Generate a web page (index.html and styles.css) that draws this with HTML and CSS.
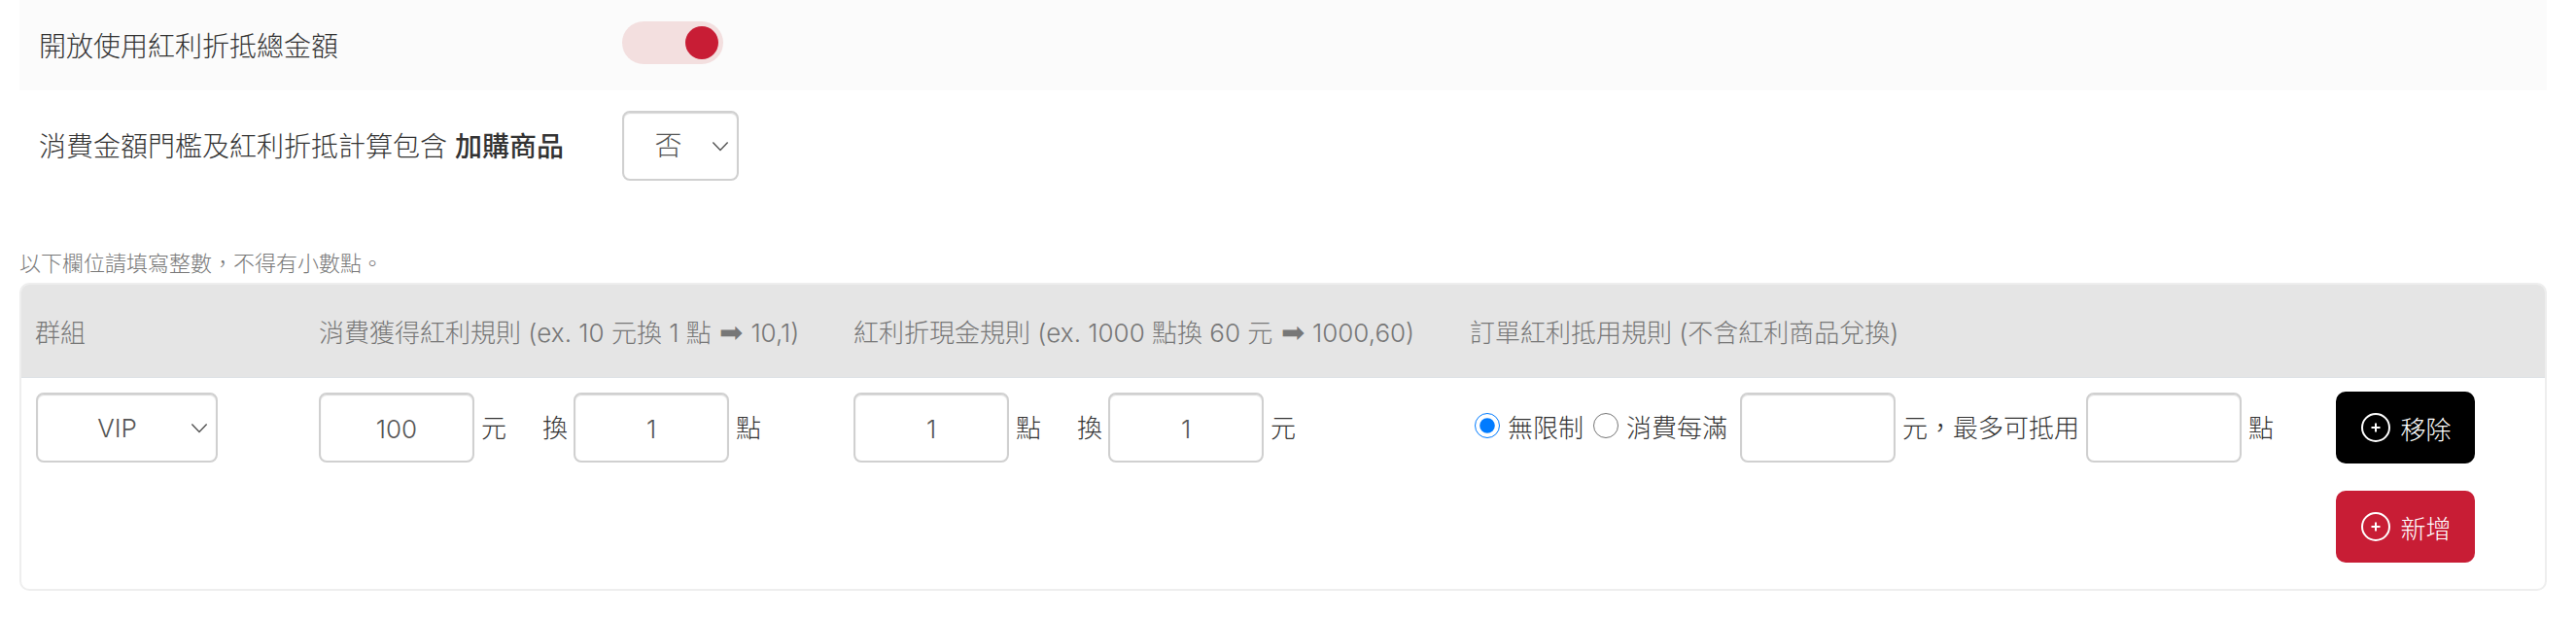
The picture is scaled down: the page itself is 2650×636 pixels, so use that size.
FILE: index.html
```html
<!DOCTYPE html>
<html lang="zh-Hant">
  <head>
    <meta charset="UTF-8" />
    <meta name="viewport" content="width=device-width, initial-scale=1.0" />
    <link rel="stylesheet" href="styles.css">
    <title>紅利設定</title>
  </head>
  <body>
    <div class="page">
      <div class="setting shaded">
        <div class="setting-label">開放使用紅利折抵總金額</div>
        <div class="toggle"><span class="knob"></span></div>
      </div>

      <div class="setting">
        <div class="setting-label">消費金額門檻及紅利折抵計算包含 <b>加購商品</b></div>
        <select class="field select-small">
          <option>否</option>
        </select>
      </div>

      <p class="note">以下欄位請填寫整數，不得有小數點。</p>

      <div class="table-box">
        <table class="rules">
          <colgroup>
            <col class="col-group" />
            <col class="col-earn" />
            <col class="col-cash" />
            <col class="col-order" />
            <col />
          </colgroup>
          <thead>
            <tr>
              <th>群組</th>
              <th>消費獲得紅利規則 (ex. 10 元換 1 點 <span class="arrow">➡</span> 10,1)</th>
              <th>紅利折現金規則 (ex. 1000 點換 60 元 <span class="arrow">➡</span> 1000,60)</th>
              <th>訂單紅利抵用規則 (不含紅利商品兌換)</th>
              <th></th>
            </tr>
          </thead>
          <tbody>
            <tr>
              <td>
                <select class="field select-group">
                  <option>VIP</option>
                </select>
              </td>
              <td>
                <div class="rule">
                  <input class="field num" type="text" value="100" />
                  <span class="unit">元</span>
                  <span class="swap">換</span>
                  <input class="field num" type="text" value="1" />
                  <span class="unit">點</span>
                </div>
              </td>
              <td>
                <div class="rule">
                  <input class="field num" type="text" value="1" />
                  <span class="unit">點</span>
                  <span class="swap">換</span>
                  <input class="field num" type="text" value="1" />
                  <span class="unit">元</span>
                </div>
              </td>
              <td>
                <div class="rule">
                  <label class="radio first"><input type="radio" name="limit" checked />無限制</label>
                  <label class="radio"><input type="radio" name="limit" />消費每滿</label>
                  <input class="field num after-radio" type="text" />
                  <span class="unit">元，最多可抵用</span>
                  <input class="field num tight" type="text" />
                  <span class="unit">點</span>
                </div>
              </td>
              <td class="actions">
                <button class="btn btn-black">
                  <svg class="plus" viewBox="0 0 30 30"><circle cx="15" cy="15" r="14" /><path d="M15 10.5v9M10.5 15h9" /></svg>
                  移除
                </button>
                <button class="btn btn-red">
                  <svg class="plus" viewBox="0 0 30 30"><circle cx="15" cy="15" r="14" /><path d="M15 10.5v9M10.5 15h9" /></svg>
                  新增
                </button>
              </td>
            </tr>
          </tbody>
        </table>
      </div>
    </div>
  </body>
</html>
```

FILE: styles.css
```css
body {
  margin: 0;
  background-color: #fff;
  color: #333;
  font-family: Inter, "Noto Sans CJK TC", sans-serif;
  font-weight: 300;
}

.page {
  padding: 0 30px 0 20px;
}

/* top settings */
.setting {
  display: flex;
  align-items: center;
  height: 114px;
}

.setting.shaded {
  height: 93px;
  background-color: #fbfbfb;
}

.setting-label {
  width: 620px;
  padding-left: 20px;
  padding-bottom: 2px;
  box-sizing: border-box;
  font-size: 28px;
}

.setting-label b {
  font-weight: 500;
}

.toggle {
  display: flex;
  justify-content: flex-end;
  align-items: center;
  width: 104px;
  height: 44px;
  margin-bottom: 6px;
  padding: 0 5px;
  box-sizing: border-box;
  border-radius: 22px;
  background-color: #f3dfdf;
}

.knob {
  width: 34px;
  height: 34px;
  border-radius: 50%;
  background-color: #c81d35;
}

.note {
  margin: 49px 0 0;
  height: 35px;
  font-size: 22px;
  line-height: 30px;
  color: #777;
}

/* form fields */
.field {
  height: 72px;
  box-sizing: border-box;
  border: 2px solid #d0d0d0;
  border-radius: 8px;
  box-shadow: inset 0 1px 1px #d8d8d8;
  background-color: #fff;
  color: #555;
  font-family: inherit;
  font-size: 26px;
  font-weight: 300;
  text-align: center;
  outline: none;
}

select.field {
  appearance: none;
  background-image: url("data:image/svg+xml,%3Csvg xmlns='http://www.w3.org/2000/svg' viewBox='0 0 20 12'%3E%3Cpath d='M1.5 1.5L10 10.5L18.5 1.5' fill='none' stroke='%23555' stroke-width='1.6'/%3E%3C/svg%3E");
  background-repeat: no-repeat;
  background-size: 18px 11px;
  background-position: right 8px center;
}

.select-small {
  width: 120px;
  padding-right: 25px;
  font-size: 28px;
}

.select-group {
  width: 187px;
  margin: 1px 0 0 1px;
  padding-right: 20px;
}

.num {
  width: 160px;
  padding: 2px 8px 0;
}

/* table */
.table-box {
  border: 2px solid #eee;
  border-radius: 10px;
  overflow: hidden;
}

.rules {
  width: 100%;
  border-collapse: collapse;
  table-layout: fixed;
}

.col-group {
  width: 292px;
}

.col-earn {
  width: 550px;
}

.col-cash {
  width: 634px;
}

.col-order {
  width: 891px;
}

.rules th {
  height: 95px;
  padding: 0 14px;
  background-color: #e5e5e5;
  border-bottom: 1px solid #dee2e6;
  color: #777;
  font-size: 26px;
  font-weight: 300;
  text-align: left;
  white-space: nowrap;
}

.rules td {
  padding: 14px;
  vertical-align: top;
  font-size: 26px;
}

.arrow {
  margin: 0 1px;
  font-family: "DejaVu Sans", sans-serif;
  font-size: 29px;
  line-height: 1;
}

.rule {
  display: flex;
  align-items: center;
  height: 72px;
  margin-top: 1px;
  white-space: nowrap;
}

.unit {
  margin-left: 7px;
  padding-bottom: 4px;
}

.swap {
  margin: 0 6px 0 37px;
  padding-bottom: 4px;
}

.radio {
  display: flex;
  align-items: center;
  margin-left: 10px;
  padding-bottom: 4px;
}

.radio.first {
  margin-left: 5px;
}

.radio input {
  width: 26px;
  height: 26px;
  margin: 0 8px 0 0;
  accent-color: #007bff;
}

.after-radio {
  margin-left: 13px;
}

.tight {
  margin-left: 7px;
}

/* buttons */
.actions {
  display: flex;
  flex-direction: column;
  align-items: flex-start;
  gap: 28px;
  padding-bottom: 27px !important;
}

.btn {
  display: flex;
  align-items: center;
  justify-content: center;
  gap: 10px;
  width: 143px;
  height: 74px;
  padding: 0 0 0 2px;
  border: none;
  border-radius: 10px;
  color: #fff;
  font-family: inherit;
  font-size: 26px;
  font-weight: 300;
}

.btn-black {
  background-color: #000;
}

.btn-red {
  background-color: #c81d35;
}

.plus {
  width: 30px;
  height: 30px;
  fill: none;
  stroke: #fff;
  stroke-width: 2;
}
```
